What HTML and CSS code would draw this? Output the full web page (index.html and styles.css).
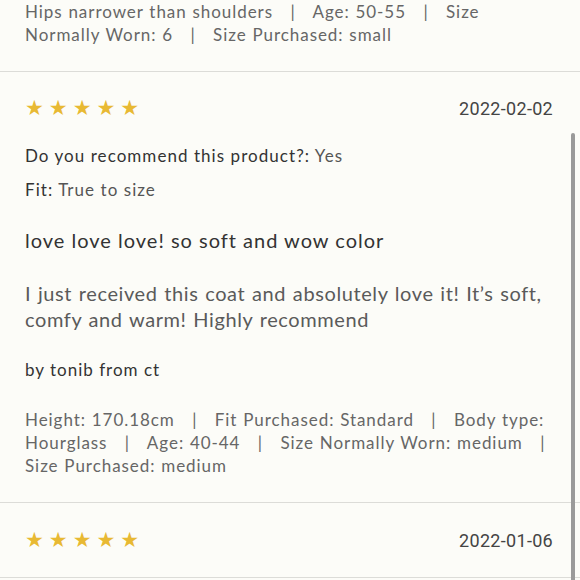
FILE: index.html
```html
<!DOCTYPE html>
<html>
<head>
<meta charset="utf-8">
<link rel="stylesheet" href="styles.css">
</head>
<body>
<div class="list">
  <section class="review review-top">
    <p class="meta">Hips narrower than shoulders&nbsp;&nbsp;&nbsp;|   Age: 50-55&nbsp;&nbsp;&nbsp;|   Size Normally Worn: 6&nbsp;&nbsp;&nbsp;|   Size Purchased: small</p>
  </section>
  <section class="review">
    <div class="head">
      <div class="stars"><span>★</span><span>★</span><span>★</span><span>★</span><span>★</span></div>
      <div class="date">2022-02-02</div>
    </div>
    <p class="qa"><span class="label">Do you recommend this product?:</span> <span class="val">Yes</span></p>
    <p class="qa fit"><span class="label">Fit:</span> <span class="val">True to size</span></p>
    <h3 class="title">love love love! so soft and wow color</h3>
    <p class="body">I just received this coat and absolutely love it! It’s soft, comfy and warm! Highly recommend</p>
    <p class="author">by tonib from ct</p>
    <p class="meta">Height: 170.18cm&nbsp;&nbsp;&nbsp;|   Fit Purchased: Standard&nbsp;&nbsp;&nbsp;|   Body type: Hourglass&nbsp;&nbsp;&nbsp;|   Age: 40-44&nbsp;&nbsp;&nbsp;|   Size Normally Worn: medium&nbsp;&nbsp;&nbsp;|   Size Purchased: medium</p>
  </section>
  <section class="review review-last">
    <div class="head">
      <div class="stars"><span>★</span><span>★</span><span>★</span><span>★</span><span>★</span></div>
      <div class="date">2022-01-06</div>
    </div>
  </section>
</div>
<div class="scrollbar"></div>
</body>
</html>
```
FILE: styles.css
```css
html, body {
  margin: 0;
  padding: 0;
  background: #fcfcf8;
  height: 580px;
  overflow: hidden;
}
body {
  font-family: Lato, "Open Sans", sans-serif;
  color: #555;
  position: relative;
}
.list {
  display: flex;
  flex-direction: column;
}
.review {
  padding: 24px 30px 25px 25px;
  border-bottom: 1px solid #dcdcd8;
}
.review-top {
  padding-top: 0;
  padding-bottom: 25px;
}
.review-last {
  padding-top: 25px;
}
.meta {
  margin: 0;
  font-size: 17px;
  line-height: 23px;
  letter-spacing: 0.95px;
  word-spacing: 0.5px;
  white-space: pre-wrap;
  color: #666;
}
.head {
  display: flex;
  justify-content: space-between;
  align-items: center;
  height: 24px;
  margin-right: -3px;
}
.stars {
  display: flex;
  gap: 5px;
  color: #e8b933;
  font-family: "DejaVu Sans", sans-serif;
  font-size: 21px;
  line-height: 24px;
}
.date {
  font-family: Roboto, sans-serif;
  font-size: 18px;
  color: #444;
  letter-spacing: 0.3px;
}
.qa {
  margin: 25px 0 0;
  font-size: 17px;
  line-height: 22px;
  letter-spacing: 1.05px;
}
.qa.fit {
  margin-top: 12px;
}
.label {
  color: #333;
}
.val {
  color: #555;
}
.title {
  margin: 27px 0 0;
  font-weight: normal;
  font-size: 20px;
  line-height: 24px;
  letter-spacing: 1px;
  color: #333;
}
.body {
  margin: 28px 0 0;
  font-size: 20px;
  line-height: 26px;
  letter-spacing: 0.6px;
  word-spacing: 1px;
  color: #5a5a5a;
}
.author {
  margin: 27px 0 0;
  font-size: 17px;
  line-height: 22px;
  letter-spacing: 1px;
  color: #333;
}
.review .author + .meta {
  margin-top: 27px;
}
.scrollbar {
  position: absolute;
  right: 5px;
  top: 133px;
  width: 4px;
  height: 460px;
  border-radius: 2px;
  background: #9a9a9a;
}
```
